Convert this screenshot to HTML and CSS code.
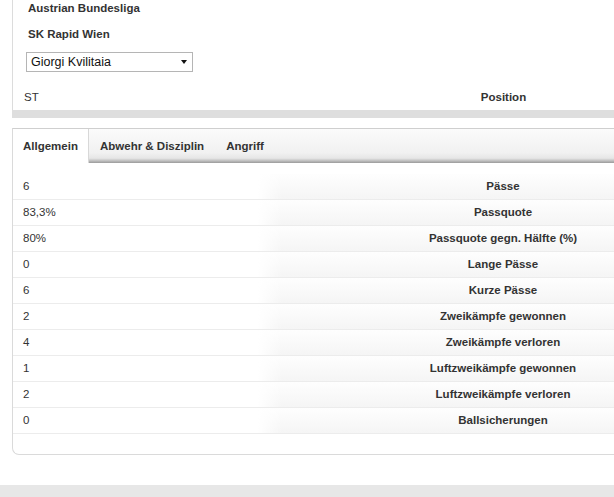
FILE: index.html
```html
<!DOCTYPE html>
<html>
<head>
<meta charset="utf-8">
<link rel="stylesheet" href="styles.css">
</head>
<body>
<div class="page">
  <div class="info">
    <div class="league">Austrian Bundesliga</div>
    <div class="club">SK Rapid Wien</div>
    <div class="select"><span class="sel-text">Giorgi Kvilitaia</span><span class="arrow"></span></div>
    <div class="pos-row">
      <div class="cell-left">ST</div>
      <div class="cell-right">Position</div>
    </div>
    <div class="info-bar"></div>
  </div>

  <div class="panel">
    <div class="tabs">
      <div class="tab active">Allgemein</div>
      <div class="tab">Abwehr &amp; Disziplin</div>
      <div class="tab">Angriff</div>
    </div>
    <div class="stats">
      <div class="row"><div class="val">6</div><div class="lbl">Pässe</div></div>
      <div class="row"><div class="val">83,3%</div><div class="lbl">Passquote</div></div>
      <div class="row"><div class="val">80%</div><div class="lbl">Passquote gegn. Hälfte (%)</div></div>
      <div class="row"><div class="val">0</div><div class="lbl">Lange Pässe</div></div>
      <div class="row"><div class="val">6</div><div class="lbl">Kurze Pässe</div></div>
      <div class="row"><div class="val">2</div><div class="lbl">Zweikämpfe gewonnen</div></div>
      <div class="row"><div class="val">4</div><div class="lbl">Zweikämpfe verloren</div></div>
      <div class="row"><div class="val">1</div><div class="lbl">Luftzweikämpfe gewonnen</div></div>
      <div class="row"><div class="val">2</div><div class="lbl">Luftzweikämpfe verloren</div></div>
      <div class="row"><div class="val">0</div><div class="lbl">Ballsicherungen</div></div>
    </div>
  </div>
</div>
<div class="footer-bar"></div>
</body>
</html>
```

FILE: styles.css
```css
html, body {
  margin: 0;
  padding: 0;
  background: #fff;
  overflow: hidden;
}
body {
  width: 614px;
  height: 497px;
  font-family: "Liberation Sans", Arial, sans-serif;
  font-size: 11.5px;
  color: #333;
  position: relative;
}
.page {
  margin-left: 12px;
  width: 736px;
}
.info {
  border-left: 1px solid #dcdcdc;
}
.league, .club {
  font-weight: bold;
  line-height: 16px;
  padding-left: 15px;
}
.club {
  margin-top: 10px;
}
.select {
  margin-top: 10px;
  margin-left: 13px;
  width: 165px;
  height: 18px;
  border: 1px solid #b5b5b5;
  background: #fff;
  display: flex;
  align-items: center;
  justify-content: space-between;
  font-size: 12.5px;
  color: #111;
}
.sel-text {
  padding-left: 4px;
}
.arrow {
  width: 0;
  height: 0;
  border-left: 3.5px solid transparent;
  border-right: 3.5px solid transparent;
  border-top: 4px solid #111;
  margin-right: 5px;
}
.pos-row {
  display: flex;
  margin-top: 12px;
  height: 26px;
  align-items: center;
}
.cell-left {
  width: 235px;
  padding-left: 11px;
}
.cell-right {
  flex: 1;
  text-align: center;
  font-weight: bold;
}
.info-bar {
  height: 8px;
  background: #dedede;
  margin-left: -1px;
}
.panel {
  margin-top: 10px;
  border-top: 1px solid #cfcfcf;
  border-left: 1px solid #dadada;
  border-bottom: 1px solid #dadada;
  border-bottom-left-radius: 7px;
  padding-bottom: 20px;
}
.tabs {
  display: flex;
  height: 34px;
  background: linear-gradient(to bottom, #fbfbfb 0%, #f1f1f1 70%, #e6e6e6 86%, #c2c2c2 93%, #9a9a9a 100%);
}
.tab {
  padding: 0 11px;
  line-height: 34px;
  font-weight: bold;
  color: #333;
}
.tab.active {
  background: #fff;
  border-right: 1px solid #d8d8d8;
  padding: 0 10px;
  width: 55px;
}
.stats {
  padding-top: 11px;
}
.row {
  display: flex;
  height: 25px;
  border-bottom: 1px solid #ececec;
}
.val {
  width: 235px;
  padding-left: 10px;
  line-height: 25px;
}
.lbl {
  flex: 1;
  text-align: center;
  font-weight: bold;
  line-height: 25px;
  background:
    linear-gradient(to right, #fff 0px, rgba(255,255,255,0) 24px),
    linear-gradient(to bottom, #fefefe, #f5f5f5);
}
.footer-bar {
  position: absolute;
  left: 0;
  top: 485px;
  width: 614px;
  height: 12px;
  background: #e7e7e7;
}
```
